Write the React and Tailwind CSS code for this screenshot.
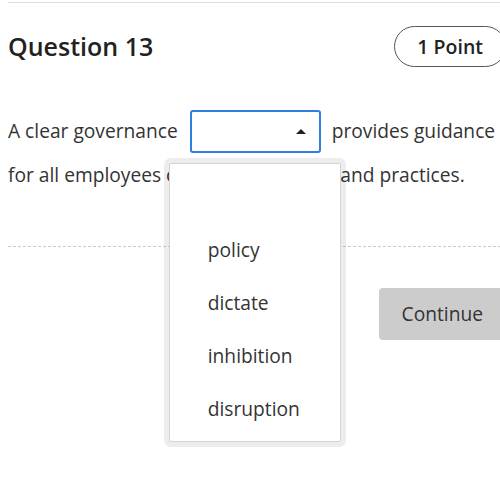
import React from "react";

export default function App() {
  const options = ["", "policy", "dictate", "inhibition", "disruption"];
  return (
    <div className="w-[500px] h-[479px] overflow-hidden bg-white" style={{ fontFamily: '"Open Sans", sans-serif' }}>
      <div className="ml-[8px] w-[498px] pt-[2px]">
        <div className="border-t border-[#dddddd]" />
        <div className="mt-[23px] flex items-center justify-between">
          <h1 className="text-[25px] font-semibold text-[#222222] leading-none">Question 13</h1>
          <div className="h-[41px] px-[22px] flex items-center border-[1.5px] border-[#555555] rounded-full text-[19.5px] font-semibold text-[#222222]">
            1 Point
          </div>
        </div>
        <div className="mt-[43px] text-[19.2px] text-[#333333] whitespace-nowrap">
          <div className="flex items-center h-[43px]">
            <span>A clear governance</span>
            <span className="relative ml-[12px] mr-[11px]">
              <span className="flex items-center justify-end h-[43px] w-[131px] border-2 border-[#2f7fe0] rounded-[3px] pr-[13px]">
                <svg width="10" height="5" viewBox="0 0 10 5">
                  <path d="M0 5 L5 0 L10 5 Z" fill="#222222" />
                </svg>
              </span>
              <span className="absolute left-[-26px] top-[48px] w-[182px] h-[289px] bg-black/[0.07] rounded-[7px] p-[5px] z-10 block">
                <span className="block h-full bg-white border border-[#d4d4d4] rounded-[2px] py-[6px]">
                  {options.map((o, i) => (
                    <span key={i} className="flex items-center h-[53px] pl-[38px] text-[19.2px] text-[#333333] leading-none">
                      {o}
                    </span>
                  ))}
                </span>
              </span>
            </span>
            <span>provides guidance</span>
          </div>
          <div className="mt-[9px] leading-[26px]">for all employees on ethical conduct{"\u00a0 "}and practices.</div>
        </div>
        <div className="mt-[58px] border-t border-dashed border-[#cccccc]" />
        <div className="mt-[41px] flex justify-end">
          <button className="h-[52px] px-[23px] bg-[#cccccc] rounded-[4px] text-[19.2px] text-[#333333]">
            Continue
          </button>
        </div>
      </div>
    </div>
  );
}
